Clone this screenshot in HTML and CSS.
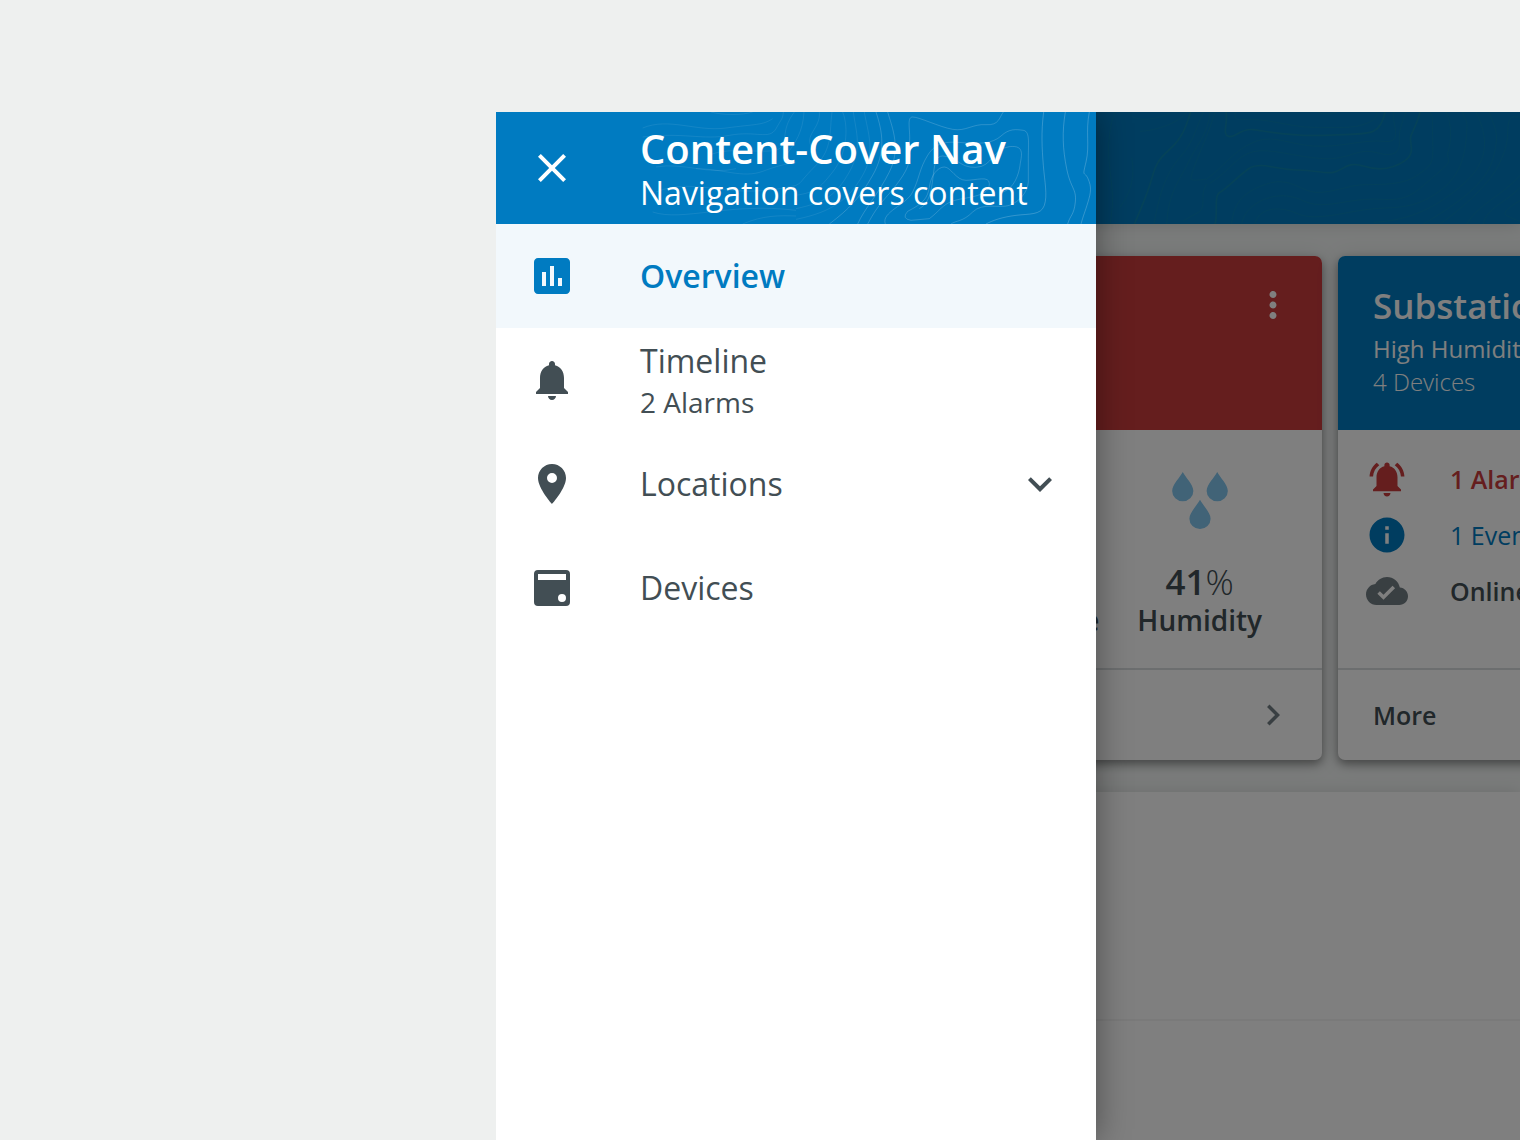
FILE: index.html
```html
<!DOCTYPE html>
<html lang="en">
<head>
<meta charset="utf-8">
<title>Content-Cover Nav</title>
<link rel="stylesheet" href="styles.css">
</head>
<body>
<div class="app">
  <div class="page">
    <header class="app-bar">
      <svg class="contours contours-page" viewBox="0 0 3072 336" aria-hidden="true">
        <g transform="translate(1782 -24)">
          <path d="M75 24C60 60 50 120 60 200S70 300 60 360M115 24C130 55 190 50 240 28M150 82C200 80 270 55 290 24M125 160C135 220 125 260 90 310"/>
          <path class="strong" d="M302 24C290 60 280 100 240 135S195 190 185 225S155 310 133 360M408 24C415 60 395 90 415 97S450 72 490 77S600 97 690 94S830 92 850 82S880 50 885 24"/>
          <path d="M340 24C315 80 310 115 270 160S210 260 192 360M360 24C355 90 315 130 295 175S235 260 230 360M375 24C350 110 310 180 302 225Q305 232 350 225C400 190 430 140 490 115S590 120 670 126S820 105 883 112S900 50 912 24"/>
          <path d="M436 24Q430 48 450 47C530 40 600 70 670 70S790 75 830 58S855 35 860 24M685 24Q710 38 740 24M350 240C325 280 355 310 320 328L280 350M360 238C420 200 440 155 490 143S620 160 700 164S800 130 860 146S930 140 928 110S935 60 948 24"/>
          <path class="strong" d="M375 360C385 330 370 275 390 265S440 220 475 195S560 198 620 198S700 210 730 205S770 170 820 186S910 195 945 170S955 115 963 95S985 50 990 24"/>
          <path d="M425 360C430 290 470 260 530 240S620 250 660 262S760 250 800 244S930 250 980 215S1030 180 1028 100S1030 50 1020 24M455 360C465 300 540 270 590 276S640 300 690 302S800 280 880 286S980 260 1040 210S1065 175 1075 140S1085 60 1068 24"/>
          <path d="M495 360C505 310 570 305 620 328S740 330 820 318S950 320 1020 280S1120 190 1128 110S1125 60 1118 24M850 355C960 350 1040 310 1120 240S1195 100 1158 24M1000 360C1100 300 1190 240 1210 160S1215 80 1198 24"/>
          <path d="M1050 360C1120 310 1200 240 1230 175S1250 90 1255 60S1275 40 1290 40M1130 360C1165 300 1230 280 1290 215M1180 360C1190 310 1250 295 1290 250M1290 290Q1230 325 1250 335T1290 352"/>
        </g>
      </svg>
    </header>

    <main class="content">
      <div class="cards">
        <article class="card">
          <header class="card-head alarm">
            <button class="icon-button" type="button" aria-label="More actions">
              <svg class="icon-md" viewBox="0 0 24 24"><path d="M12 8c1.100 0 2-.9 2-2s-.9-2-2-2-2 .9-2 2 .9 2 2 2zm0 2c-1.100 0-2 .9-2 2s.9 2 2 2 2-.9 2-2-.9-2-2-2zm0 6c-1.100 0-2 .9-2 2s.9 2 2 2 2-.9 2-2-.9-2-2-2z"/></svg>
            </button>
          </header>
          <div class="card-body heroes">
            <div class="hero">
              <p class="hero-label">Temperature</p>
            </div>
            <div class="hero">
              <svg class="drops" viewBox="0 0 168 172" aria-hidden="true">
                <path d="M32 0C24 16 0 38 0 57a32 31 0 0 0 64 0C64 38 40 16 32 0zM136 0C128 16 104 38 104 57a32 31 0 0 0 64 0C168 38 144 16 136 0zM84 84C76 100 52 122 52 141a32 31 0 0 0 64 0C116 122 92 100 84 84z"/>
              </svg>
              <p class="hero-value">41<span class="unit">%</span></p>
              <p class="hero-label">Humidity</p>
            </div>
          </div>
          <footer class="card-foot end">
            <a class="icon-button muted" href="#" aria-label="Open">
              <svg class="icon-md" viewBox="0 0 24 24"><path d="M10 6L8.590 7.410 13.170 12l-4.580 4.590L10 18l6-6z"/></svg>
            </a>
          </footer>
        </article>

        <article class="card">
          <header class="card-head info">
            <div class="card-titles">
              <h2 class="card-title">Substation 3</h2>
              <p class="card-line">High Humidity Alarm</p>
              <p class="card-line light">4 Devices</p>
            </div>
          </header>
          <ul class="card-body statuses">
            <li class="status red">
              <svg class="icon-md" viewBox="0 0 24 24"><path d="M7.580 4.080L6.150 2.650C3.750 4.480 2.170 7.300 2.030 10.500h2c.15-2.650 1.510-4.970 3.550-6.420zm12.390 6.420h2c-.15-3.200-1.730-6.020-4.120-7.850l-1.420 1.430c2.020 1.450 3.390 3.770 3.540 6.420zM18 11c0-3.070-1.640-5.640-4.500-6.320V4c0-.83-.67-1.500-1.500-1.500s-1.500.67-1.500 1.500v.68C7.630 5.360 6 7.920 6 11v5l-2 2v1h16v-1l-2-2zm-6 11c1.100 0 2-.9 2-2h-4c0 1.100.89 2 2 2z"/></svg>
              <strong>1 Alarm</strong>
            </li>
            <li class="status blue">
              <svg class="icon-md" viewBox="0 0 24 24"><path d="M12 2C6.480 2 2 6.480 2 12s4.480 10 10 10 10-4.480 10-10S17.520 2 12 2zm1 15h-2v-6h2v6zm0-8h-2V7h2v2z"/></svg>
              <span>1 Event</span>
            </li>
            <li class="status">
              <svg class="icon-md muted" viewBox="0 0 24 24"><path d="M19.350 10.040C18.670 6.590 15.640 4 12 4 9.110 4 6.600 5.640 5.350 8.040 2.340 8.360 0 10.910 0 14c0 3.310 2.690 6 6 6h13c2.760 0 5-2.240 5-5 0-2.640-2.050-4.780-4.650-4.960zM10 17l-3.500-3.500 1.410-1.410L10 14.170 15.180 9l1.410 1.410L10 17z"/></svg>
              <strong>Online</strong>
            </li>
          </ul>
          <footer class="card-foot">
            <a class="more" href="#">More</a>
          </footer>
        </article>
      </div>

      <section class="panel">
        <div class="panel-row"></div>
        <div class="panel-row"></div>
      </section>
    </main>
    <div class="scrim"></div>
  </div>

  <aside class="drawer">
    <header class="drawer-head">
      <svg class="contours contours-drawer" viewBox="0 0 1800 336" aria-hidden="true">
        <path class="faint" d="M440 48C520 15 600 60 690 48S800 40 830 20M645 0C680 10 740 10 770 0M440 75C560 60 620 85 700 70S820 85 840 50S860 20 862 0M895 0C850 60 880 90 850 110S700 100 640 130M600 170C680 170 740 200 800 178S860 160 900 150M480 165C560 150 640 190 720 170M480 240C600 190 700 270 900 220M470 300C560 330 700 270 900 295M740 336C800 310 850 310 900 312"/>
        <g transform="translate(900 0)">
          <path class="faint" d="M24 0C20 60 0 90 -30 130M70 0C75 50 20 70 50 110M108 0C100 60 110 110 60 160S20 210 0 220M140 0C160 50 150 130 110 180S60 240 0 250M172 0C180 60 200 110 160 180S90 270 0 290M205 0C215 60 240 120 200 190S110 300 0 322"/>
          <path class="mid" d="M240 0C260 60 270 120 230 190S160 290 100 336M275 0C290 50 315 110 280 180S205 290 185 336M340 95C345 60 330 15 350 15S430 45 470 52S530 35 570 38S610 15 622 0M340 95C350 150 330 180 300 220S250 270 215 336"/>
          <path class="mid" d="M268 336C255 300 330 280 350 240S370 170 395 130S450 88 500 92S590 95 615 72S660 52 682 55S696 100 697 150V210C695 240 670 270 640 280S560 270 530 300S480 325 465 336"/>
          <path class="mid" d="M345 325Q315 320 335 298C380 275 395 260 400 225S425 165 445 165S480 205 510 205S580 190 580 215S560 250 500 260S440 290 400 320T345 325"/>
          <path class="mid" d="M370 290C430 260 395 130 440 132S490 168 540 166S590 110 640 104S675 135 672 160S655 230 620 240"/>
          <path d="M743 0C735 60 738 110 742 160S755 250 745 280S700 305 660 310S590 325 570 336M808 0C798 60 800 110 812 170S842 230 838 270S822 310 815 336M880 0C868 60 882 100 870 150S865 175 876 200S885 240 876 270S862 310 855 336"/>
        </g>
      </svg>
      <button class="icon-button" type="button" aria-label="Close navigation">
        <svg class="icon-lg" viewBox="0 0 24 24"><path d="M19 6.410L17.590 5 12 10.590 6.410 5 5 6.410 10.590 12 5 17.590 6.410 19 12 13.410 17.590 19 19 17.590 13.410 12z"/></svg>
      </button>
      <div class="drawer-titles">
        <h1 class="drawer-title">Content-Cover Nav</h1>
        <p class="drawer-subtitle">Navigation covers content</p>
      </div>
    </header>
    <nav class="nav">
      <a class="nav-item active" href="#" aria-current="page">
        <svg class="icon-lg" viewBox="0 0 24 24"><path d="M19 3H5c-1.100 0-2 .9-2 2v14c0 1.100.9 2 2 2h14c1.100 0 2-.9 2-2V5c0-1.100-.9-2-2-2zM9 17H7v-7h2v7zm4 0h-2V7h2v10zm4 0h-2v-4h2v4z"/></svg>
        <span class="nav-text">Overview</span>
      </a>
      <a class="nav-item" href="#">
        <svg class="icon-lg" viewBox="0 0 24 24"><path d="M12 22c1.100 0 2-.9 2-2h-4c0 1.100.89 2 2 2zm6-6v-5c0-3.070-1.640-5.640-4.500-6.320V4c0-.83-.67-1.500-1.500-1.500s-1.500.67-1.500 1.500v.68C7.630 5.360 6 7.920 6 11v5l-2 2v1h16v-1l-2-2z"/></svg>
        <span class="nav-text">Timeline<small class="nav-sub">2 Alarms</small></span>
      </a>
      <button class="nav-item" type="button" aria-expanded="false">
        <svg class="icon-lg" viewBox="0 0 24 24"><path d="M12 2C8.130 2 5 5.130 5 9c0 5.250 7 13 7 13s7-7.750 7-13c0-3.870-3.130-7-7-7zm0 9.500a2.500 2.500 0 0 1 0-5 2.500 2.500 0 0 1 0 5z"/></svg>
        <span class="nav-text">Locations</span>
        <svg class="icon-lg" viewBox="0 0 24 24"><path d="M16.590 8.590L12 13.170 7.410 8.590 6 10l6 6 6-6z"/></svg>
      </button>
      <a class="nav-item" href="#">
        <svg class="icon-lg" viewBox="0 0 24 24"><path fill-rule="evenodd" d="M5 3h14a2 2 0 0 1 2 2v14a2 2 0 0 1-2 2H5a2 2 0 0 1-2-2V5a2 2 0 0 1 2-2zM5 5v3h14V5zM17 15a2 2 0 0 0 0 4 2 2 0 0 0 0-4z"/></svg>
        <span class="nav-text">Devices</span>
      </a>
    </nav>
  </aside>
</div>
</body>
</html>
```
FILE: styles.css
```css
:root {
  --blue: #007bc1;
  --red: #ca3c3d;
  --ink: #424e54;
  --muted: #727e84;
  --canvas: #eef0ef;
}

* {
  box-sizing: border-box;
}

body,
h1,
h2,
p,
ul {
  margin: 0;
  padding: 0;
}

body {
  min-height: 100vh;
  padding: 112px 0 0 496px;
  display: flex;
  overflow: hidden;
  background: var(--canvas);
  color: var(--ink);
  font-family: "Open Sans", "Noto Sans", sans-serif;
}

a {
  color: inherit;
  text-decoration: none;
}

button {
  padding: 0;
  border: 0;
  background: none;
  color: inherit;
  font: inherit;
  text-align: left;
}

svg {
  display: block;
  flex: none;
  fill: currentColor;
}

.icon-lg {
  width: 48px;
  height: 48px;
}

.icon-md {
  width: 42px;
  height: 42px;
}

.icon-button {
  flex: none;
}

.muted {
  color: var(--muted);
}

/* The drawer and the page share one grid cell, drawer on top. */
.app {
  flex: 1;
  min-width: 0;
  display: grid;
  grid-template-columns: minmax(0, 1fr);
  overflow: hidden;
}

.page,
.drawer {
  grid-area: 1 / 1;
}

.page {
  position: relative;
  display: flex;
  flex-direction: column;
  overflow: hidden;
}

.scrim {
  position: absolute;
  inset: 0;
  background: rgba(0, 0, 0, 0.5);
}

.app-bar,
.drawer-head {
  position: relative;
  height: 112px;
  flex: none;
  background: var(--blue);
  color: #fff;
}

.app-bar {
  box-shadow: 0 0 16px rgba(0, 0, 0, 0.15);
}

.contours {
  position: absolute;
  top: 0;
  left: 0;
  height: 112px;
  fill: none;
  stroke: #fff;
  stroke-opacity: 0.2;
  stroke-width: 3;
}

.contours-page {
  width: 1024px;
  stroke: #30a878;
  stroke-opacity: 0.12;
}

.contours-page .strong {
  stroke-opacity: 0.2;
  stroke-width: 5;
}

.contours-drawer {
  width: 600px;
}

.contours .faint {
  stroke-opacity: 0.08;
}

.contours .mid {
  stroke-opacity: 0.17;
}

/* Drawer */
.drawer {
  position: relative;
  width: 600px;
  background: #fff;
  box-shadow: 0 0 32px rgba(0, 0, 0, 0.4);
}

.drawer-head {
  display: flex;
  align-items: center;
  gap: 64px;
  padding: 0 32px;
}

.drawer-head .icon-button,
.drawer-titles {
  position: relative;
}

.drawer-titles {
  padding-top: 6px;
}

.drawer-title {
  font-size: 40px;
  font-weight: 600;
  line-height: 44px;
}

.drawer-subtitle {
  font-size: 32px;
  line-height: 44px;
}

.nav-item {
  width: 100%;
  height: 104px;
  display: flex;
  align-items: center;
  gap: 64px;
  padding: 0 32px;
  font-size: 32px;
  line-height: 44px;
}

.nav-item.active {
  background: #f2f8fc;
  color: var(--blue);
  font-weight: 600;
}

.nav-text {
  flex: 1;
}

.nav-sub {
  display: block;
  font-size: 28px;
  line-height: 38px;
}

/* Page content */
.content {
  flex: 1;
  display: flex;
  flex-direction: column;
  gap: 32px;
  padding-top: 32px;
  background: #f5f8f7;
}

.cards {
  display: flex;
  gap: 16px;
  padding: 0 32px;
}

.card {
  flex: 0 0 794px;
  height: 504px;
  display: flex;
  flex-direction: column;
  border-radius: 7px;
  background: #fff;
  box-shadow: 0 4px 10px rgba(0, 0, 0, 0.4), 0 2px 24px rgba(0, 0, 0, 0.1);
  overflow: hidden;
}

.card-head {
  height: 174px;
  display: flex;
  align-items: flex-start;
  padding: 28px 28px 28px 35px;
  color: #fff;
}

.card-head.alarm {
  justify-content: flex-end;
  background: var(--red);
}

.card-head.info {
  background: var(--blue);
}

.card-title {
  margin-bottom: 4px;
  font-size: 35px;
  font-weight: 600;
  line-height: 44px;
}

.card-line {
  font-size: 24px;
  line-height: 33px;
}

.card-line.light {
  font-weight: 300;
}

.card-body {
  flex: 1;
  padding: 21px 28px;
}

.card-foot {
  height: 92px;
  display: flex;
  align-items: center;
  padding: 0 28px 0 35px;
  border-top: 2px solid #d8dcde;
}

.card-foot.end {
  justify-content: flex-end;
}

.more {
  font-size: 25px;
  font-weight: 600;
}

.heroes {
  display: flex;
  justify-content: flex-end;
  align-items: flex-end;
  gap: 38px;
  padding: 40px 60px 30px;
}

.hero {
  display: flex;
  flex-direction: column;
  align-items: center;
}

.drops {
  width: 56px;
  height: 57px;
  margin-bottom: 32px;
  color: #82c6ee;
}

.hero-value {
  font-size: 35px;
  font-weight: 600;
  line-height: 42px;
}

.unit {
  font-weight: 300;
}

.hero-label {
  font-size: 28px;
  font-weight: 600;
  line-height: 35px;
}

.statuses {
  list-style: none;
}

.status {
  height: 56px;
  display: flex;
  align-items: center;
  gap: 42px;
  font-size: 25px;
}

.status strong {
  font-weight: 600;
}

.status.red {
  color: var(--red);
}

.status.blue {
  color: var(--blue);
}

.panel {
  flex: 1;
  background: #fff;
  box-shadow: 0 0 16px rgba(0, 0, 0, 0.12);
}

.panel-row {
  height: 227px;
}

.panel-row + .panel-row {
  height: auto;
  border-top: 2px solid #f4f4f4;
}
```
